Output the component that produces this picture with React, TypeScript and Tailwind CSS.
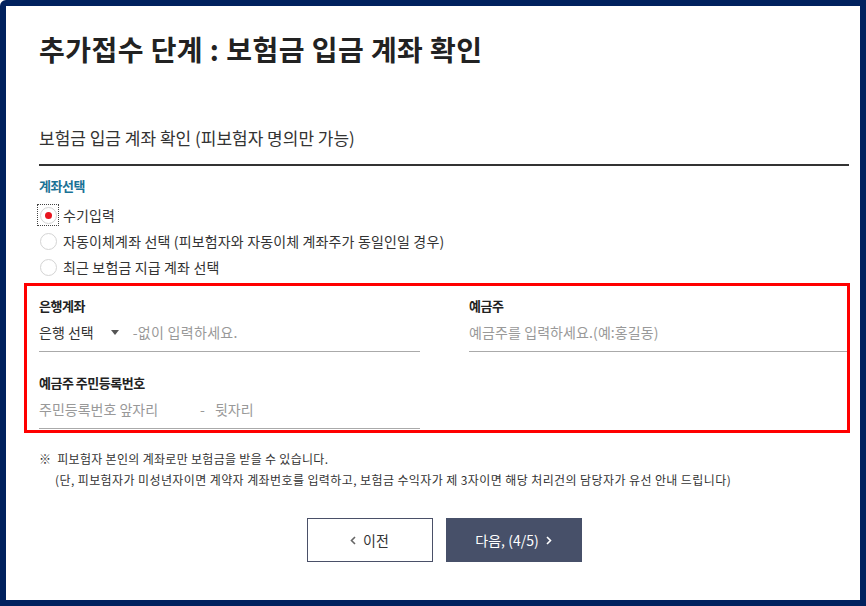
import React from "react";

const font = "font-['Noto_Sans_CJK_KR','Noto_Sans',sans-serif]";

function Radio({ checked, focused, label }: { checked?: boolean; focused?: boolean; label: string }) {
  return (
    <div className="flex h-[26px] items-center">
      <div className="relative flex h-[18px] w-[18px] items-center justify-center">
        {focused && (
          <div className="absolute -inset-[2px] border border-dotted border-[#444]" />
        )}
        <div className="flex h-[17px] w-[17px] items-center justify-center rounded-full border border-[#d4d4d4] bg-white">
          {checked && <div className="h-[7px] w-[7px] rounded-full bg-[#e8141e]" />}
        </div>
      </div>
      <span className="ml-[6px] text-[14px] leading-[20px] tracking-[0.15px] text-[#333]">{label}</span>
    </div>
  );
}

export default function App() {
  return (
    <div
      className={`${font} box-border h-[606px] w-[866px] rounded-tl-[6px] border-[6px] border-[#00215e] bg-white pl-[33px] pr-[11px] pt-[25px]`}
    >
      <h1 className="h-[36px] text-[28px] font-bold leading-[36px] tracking-[0.45px] text-[#222]">
        추가접수 단계 : 보험금 입금 계좌 확인
      </h1>

      <div className="mt-[59px] border-b-2 border-[#333] pb-[14px]">
        <div className="text-[17px] leading-[24px] text-[#333]">
          보험금 입금 계좌 확인 (피보험자 명의만 가능)
        </div>
      </div>

      <div className="mt-[10px] text-[13px] font-bold leading-[20px] tracking-[-0.5px] text-[#1a7296]">
        계좌선택
      </div>

      <div className="mt-[6px] flex flex-col">
        <Radio checked focused label="수기입력" />
        <Radio label="자동이체계좌 선택 (피보험자와 자동이체 계좌주가 동일인일 경우)" />
        <Radio label="최근 보험금 지급 계좌 선택" />
      </div>

      <div className="ml-[-15px] mt-[3px] box-border h-[150px] w-[826px] overflow-hidden border-[3px] border-[#ff0000] pl-[12px] pt-[10px]">
        <div className="grid grid-cols-[381px_378px] gap-x-[49px]">
          <div>
            <div className="text-[13px] font-bold leading-[20px] tracking-[-0.5px] text-[#222]">은행계좌</div>
            <div className="flex h-[36px] items-center border-b border-[#aaa] pb-[3px] text-[14px]">
              <span className="text-[#333]">은행 선택</span>
              <svg width="8" height="5" viewBox="0 0 8 5" className="ml-[17px]">
                <path d="M0 0 H8 L4 5 Z" fill="#555" />
              </svg>
              <span className="ml-[14px] tracking-[0.3px] text-[#999]">-없이 입력하세요.</span>
            </div>
          </div>
          <div>
            <div className="text-[13px] font-bold leading-[20px] tracking-[-0.5px] text-[#222]">예금주</div>
            <div className="flex h-[36px] items-center border-b border-[#aaa] pb-[3px] text-[14px] tracking-[0.1px] text-[#999]">
              예금주를 입력하세요.(예:홍길동)
            </div>
          </div>
          <div className="mt-[21px]">
            <div className="text-[13px] font-bold leading-[20px] tracking-[-0.5px] text-[#222]">예금주 주민등록번호</div>
            <div className="flex h-[36px] items-center border-b border-[#aaa] pb-[2px] text-[14px] text-[#999]">
              <span>주민등록번호 앞자리</span>
              <span className="ml-[42px]">-</span>
              <span className="ml-[10px]">뒷자리</span>
            </div>
          </div>
        </div>
      </div>

      <div className="mt-[15px] text-[12px] leading-[21px] tracking-[0.3px] text-[#333]">
        <div>※&nbsp;&nbsp;피보험자 본인의 계좌로만 보험금을 받을 수 있습니다.</div>
        <div className="pl-[16px] tracking-[0.4px]">
          (단, 피보험자가 미성년자이면 계약자 계좌번호를 입력하고, 보험금 수익자가 제 3자이면 해당 처리건의 담당자가 유선 안내 드립니다)
        </div>
      </div>

      <div className="mt-[28px] flex justify-center gap-[13px]">
        <button className="flex h-[44px] w-[126px] items-center justify-center border border-[#4a5068] bg-white text-[14px] text-[#333]">
          <svg width="6" height="9" viewBox="0 0 6 9" className="mr-[7px]">
            <path d="M5 1 L1.5 4.5 L5 8" stroke="#666" strokeWidth="1.6" fill="none" />
          </svg>
          이전
        </button>
        <button className="flex h-[44px] w-[136px] items-center justify-center bg-[#475069] text-[14px] text-white">
          다음, (4/5)
          <svg width="6" height="9" viewBox="0 0 6 9" className="ml-[7px]">
            <path d="M1 1 L4.5 4.5 L1 8" stroke="#fff" strokeWidth="1.6" fill="none" />
          </svg>
        </button>
      </div>
    </div>
  );
}
